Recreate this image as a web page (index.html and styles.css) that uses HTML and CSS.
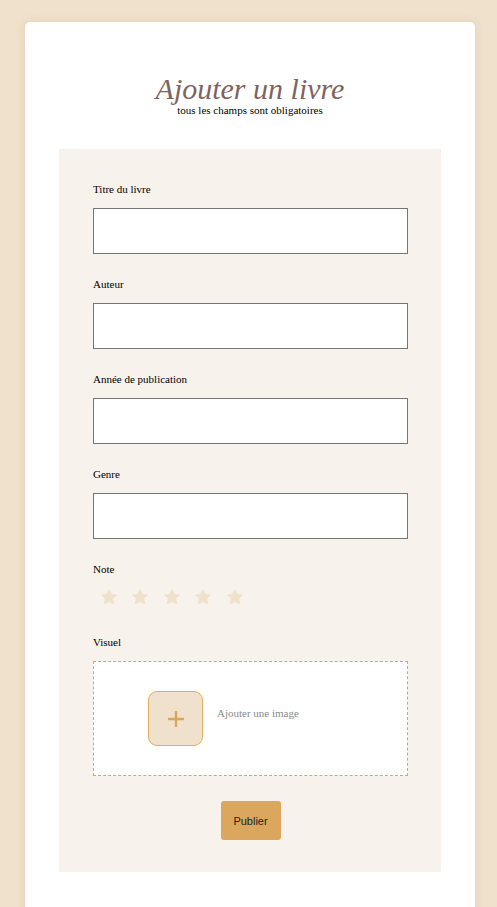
FILE: index.html
```html
<!DOCTYPE html>
<html lang="fr">
<head>
<meta charset="utf-8">
<title>Ajouter un livre</title>
<link rel="stylesheet" href="styles.css">
</head>
<body>
<main class="card">
  <header class="head">
    <h1 class="title">Ajouter un livre</h1>
    <p class="subtitle">tous les champs sont obligatoires</p>
  </header>
  <form class="panel">
    <div class="field">
      <label class="label" for="t">Titre du livre</label>
      <input class="input" id="t" type="text">
    </div>
    <div class="field">
      <label class="label" for="a">Auteur</label>
      <input class="input" id="a" type="text">
    </div>
    <div class="field">
      <label class="label" for="y">Année de publication</label>
      <input class="input" id="y" type="text">
    </div>
    <div class="field">
      <label class="label" for="g">Genre</label>
      <input class="input" id="g" type="text">
    </div>
    <div class="field field-note">
      <span class="label">Note</span>
      <div class="stars">
        <span class="star"><svg viewBox="0 0 24 24" width="18" height="18"><path d="M12 2.5l2.9 6.1 6.6.8-4.9 4.6 1.3 6.6L12 17.3l-5.9 3.3 1.3-6.6-4.9-4.6 6.6-.8z" fill="currentColor" stroke="currentColor" stroke-width="1.5" stroke-linejoin="round"/></svg></span>
        <span class="star"><svg viewBox="0 0 24 24" width="18" height="18"><path d="M12 2.5l2.9 6.1 6.6.8-4.9 4.6 1.3 6.6L12 17.3l-5.9 3.3 1.3-6.6-4.9-4.6 6.6-.8z" fill="currentColor" stroke="currentColor" stroke-width="1.5" stroke-linejoin="round"/></svg></span>
        <span class="star"><svg viewBox="0 0 24 24" width="18" height="18"><path d="M12 2.5l2.9 6.1 6.6.8-4.9 4.6 1.3 6.6L12 17.3l-5.9 3.3 1.3-6.6-4.9-4.6 6.6-.8z" fill="currentColor" stroke="currentColor" stroke-width="1.5" stroke-linejoin="round"/></svg></span>
        <span class="star"><svg viewBox="0 0 24 24" width="18" height="18"><path d="M12 2.5l2.9 6.1 6.6.8-4.9 4.6 1.3 6.6L12 17.3l-5.9 3.3 1.3-6.6-4.9-4.6 6.6-.8z" fill="currentColor" stroke="currentColor" stroke-width="1.5" stroke-linejoin="round"/></svg></span>
        <span class="star"><svg viewBox="0 0 24 24" width="18" height="18"><path d="M12 2.5l2.9 6.1 6.6.8-4.9 4.6 1.3 6.6L12 17.3l-5.9 3.3 1.3-6.6-4.9-4.6 6.6-.8z" fill="currentColor" stroke="currentColor" stroke-width="1.5" stroke-linejoin="round"/></svg></span>
      </div>
    </div>
    <div class="field">
      <span class="label">Visuel</span>
      <div class="drop">
        <div class="plus-box">
          <svg viewBox="0 0 20 20" width="20" height="20"><path d="M10 2v16M2 10h16" stroke="currentColor" stroke-width="2.4"/></svg>
        </div>
        <span class="drop-text">Ajouter une image</span>
      </div>
    </div>
    <div class="actions">
      <button class="btn" type="button">Publier</button>
    </div>
  </form>
</main>
</body>
</html>
```
FILE: styles.css
```css
html, body {
  margin: 0;
  padding: 0;
}
body {
  background: #f0e1cc;
  font-family: "Liberation Serif", "Times New Roman", serif;
  color: #000;
  overflow: hidden;
  height: 907px;
}
.card {
  margin: 22px 22px 0 25px;
  background: #fff;
  border-radius: 5px;
  box-shadow: 0 0 10px rgba(180, 140, 90, 0.18);
  padding: 51px 34px 60px;
}
.head {
  text-align: center;
}
.title {
  margin: 0;
  font-family: "Liberation Serif", "Times New Roman", serif;
  font-style: italic;
  font-weight: normal;
  font-size: 30px;
  line-height: 31px;
  color: #7d6460;
}
.subtitle {
  margin: 0;
  font-size: 11px;
  line-height: 13px;
}
.panel {
  margin-top: 32px;
  background: #f7f2ec;
  padding: 34px 33px 32px 34px;
}
.field {
  display: flex;
  flex-direction: column;
  margin-bottom: 24px;
}
.label {
  font-size: 11px;
  line-height: 13px;
  margin-bottom: 12px;
}
.input {
  box-sizing: border-box;
  height: 46px;
  width: 100%;
  margin: 0;
  border: 1px solid #767676;
  background: #fff;
  padding: 0 8px;
  font: 13px "Liberation Serif", serif;
}
.field-note {
  margin-bottom: 30px;
}
.stars {
  display: flex;
  height: 18px;
}
.star {
  width: 31.5px;
  display: flex;
  justify-content: center;
  color: #f0e1cc;
}
.drop {
  box-sizing: border-box;
  height: 115px;
  border: 1px dashed #dca558;
  background: #fff;
  display: flex;
  align-items: center;
  padding-left: 54px;
  gap: 14px;
}
.plus-box {
  box-sizing: border-box;
  width: 55px;
  height: 55px;
  border: 1px solid #e1ae65;
  border-radius: 9px;
  background: #f0e1cc;
  color: #dba65e;
  display: flex;
  align-items: center;
  justify-content: center;
  padding-top: 1px;
}
.drop-text {
  font-size: 11px;
  line-height: 13px;
  color: #8a8a8a;
  margin-bottom: 10px;
}
.actions {
  display: flex;
  justify-content: center;
  padding-top: 1px;
}
.btn {
  width: 60px;
  height: 39px;
  border: 0;
  border-radius: 3px;
  background: #dba65e;
  color: #222;
  font: 11px "Liberation Sans", Arial, sans-serif;
  padding: 0;
}
```
